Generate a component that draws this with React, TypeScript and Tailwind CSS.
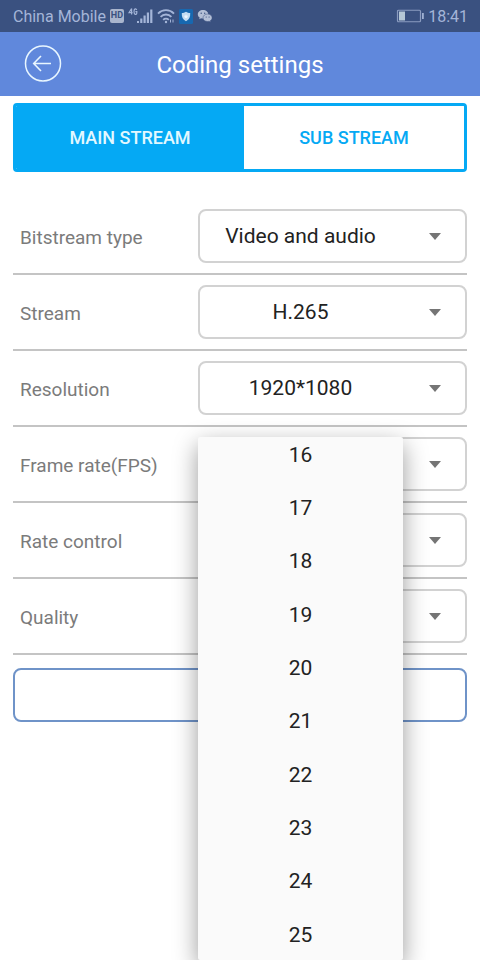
import { useState } from "react";

interface Setting {
  id: string;
  label: string;
  options: string[];
}

const SETTINGS: Setting[] = [
  {
    id: "bitstream",
    label: "Bitstream type",
    options: ["Video and audio", "Video"],
  },
  { id: "stream", label: "Stream", options: ["H.265", "H.264"] },
  { id: "resolution", label: "Resolution", options: ["1920*1080", "1280*720"] },
  { id: "fps", label: "Frame rate(FPS)", options: [] },
  { id: "rate", label: "Rate control", options: [] },
  { id: "quality", label: "Quality", options: [] },
];

const FRAME_RATES = [16, 17, 18, 19, 20, 21, 22, 23, 24, 25];

const SignalIcon = () => (
  <svg viewBox="0 0 25 18" className="h-[18px] w-[25px]" fill="currentColor">
    <path
      d="M3.6 1.500 1 5.700h3.600M3.600 1.500v6M8.700 3C8.100 1.200 6 1.200 6 4.500s2.300 3.800 2.800 1.600V4.700H7.400"
      fill="none"
      stroke="currentColor"
      strokeWidth="1.200"
    />
    <path d="M9 14h2v2H9zM12.200 11.500h2.200V16h-2.200zM15.500 8.500h2.200V16h-2.200zM18.800 5.500H21V16h-2.200zM22.200 2.500h2.200V16h-2.200z" />
  </svg>
);

const WifiIcon = () => (
  <svg
    viewBox="0 0 18 16"
    className="h-4 w-[18px]"
    fill="none"
    stroke="currentColor"
    strokeWidth="1.900"
  >
    <path d="M1 5.600C5.500 1 12.500 1 17 5.600M3.600 8.800c3-3 7.800-3 10.800 0M6.200 11.800c1.600-1.600 4-1.600 5.600 0" />
    <circle cx="9" cy="14" r="1.200" fill="currentColor" stroke="none" />
    <path d="M13.500 11.500v3M16 11.500v3" strokeWidth="1" />
  </svg>
);

const ShieldIcon = () => (
  <svg viewBox="0 0 14 15" className="h-[15px] w-[14px]">
    <rect width="14" height="15" rx="1.500" fill="#1768b0" />
    <path
      d="M7 2.800c1.300.9 2.700 1.200 4.200 1.200.2 3.900-.9 6.600-4.200 8.200-3.300-1.600-4.400-4.300-4.200-8.200C4.300 4 5.700 3.700 7 2.800Z"
      fill="#c3dcf2"
    />
    <path
      d="m7 5.200.7 1.500 1.600.1-1.200 1.100.4 1.600L7 8.700l-1.500.8.4-1.600-1.200-1.100 1.600-.1Z"
      fill="#eef6fd"
    />
  </svg>
);

const ChatIcon = () => (
  <svg viewBox="0 0 16 14" className="h-[14px] w-4">
    <path
      d="M6 1C3 1 .8 2.900.8 5.300c0 1.400.7 2.500 1.900 3.300l-.5 1.700 1.900-1c.6.2 1.200.3 1.900.3 3 0 5.300-1.900 5.300-4.300S9 1 6 1Z"
      fill="#b3bfd6"
    />
    <path
      d="M10.600 5C8 5 6 6.700 6 8.800s2 3.700 4.600 3.700c.5 0 1-.1 1.500-.2l1.600.9-.4-1.500c1.100-.7 1.800-1.700 1.800-2.900 0-2.100-2-3.800-4.500-3.800Z"
      fill="#b3bfd6"
      stroke="#3a5180"
      strokeWidth=".5"
    />
    <g fill="#3a5180">
      <circle cx="4.200" cy="4.200" r=".7" />
      <circle cx="7.700" cy="4.200" r=".7" />
      <circle cx="9.200" cy="8" r=".6" />
      <circle cx="12.100" cy="8" r=".6" />
    </g>
  </svg>
);

const BatteryIcon = () => (
  <svg viewBox="0 0 28 14" className="h-[14px] w-7">
    <rect
      x="1.500"
      y="1.250"
      width="23"
      height="11.500"
      rx="1"
      fill="none"
      stroke="#8b9cc0"
      strokeWidth="1.200"
    />
    <rect x="3" y="2.500" width="6" height="9" fill="#b5c7d6" />
    <rect x="26" y="4" width="1.800" height="6" fill="#9fb0d2" />
  </svg>
);

const StatusBar = () => (
  <div className="flex h-8 items-center justify-between bg-[#3a5180] pr-3 pl-[13px] text-[#a4b5d8]">
    <div className="flex items-center">
      <span className="pt-0.5 text-base">China Mobile</span>
      <span className="ml-1 flex h-[14px] w-[14px] items-center justify-center rounded-xs bg-[#a9b5cd] text-[9px] font-bold text-[#3a5180]">
        HD
      </span>
      <span className="ml-1 flex">
        <SignalIcon />
      </span>
      <span className="ml-1 flex">
        <WifiIcon />
      </span>
      <span className="ml-1 flex">
        <ShieldIcon />
      </span>
      <span className="ml-1 flex">
        <ChatIcon />
      </span>
    </div>
    <div className="flex items-center gap-1">
      <BatteryIcon />
      <span className="pt-0.5 text-base">18:41</span>
    </div>
  </div>
);

const Header = () => (
  <header className="grid h-16 grid-cols-[72px_1fr_72px] items-center bg-[#6088dc] text-white">
    <button type="button" aria-label="Back" className="ml-6 w-[38px]">
      <svg
        viewBox="0 0 38 38"
        className="h-[38px] w-[38px]"
        fill="none"
        stroke="#e8f6ff"
        strokeWidth="1.500"
      >
        <circle cx="19" cy="18.500" r="17.500" />
        <path
          d="M27 18.500H10M17 11 9.700 18.500l7.300 7.500"
          strokeWidth="1.600"
        />
      </svg>
    </button>
    <h1 className="pt-0.5 text-center text-2xl">Coding settings</h1>
  </header>
);

const App = () => {
  const [activeStream, setActiveStream] = useState("MAIN STREAM");
  const [menuOpen, setMenuOpen] = useState(true);
  const [frameRate, setFrameRate] = useState<number | null>(null);

  return (
    <div className="min-h-screen bg-white font-[Roboto,sans-serif]">
      <StatusBar />
      <Header />

      <main className="px-[13px] pt-[7px]">
        <div className="grid h-[69px] grid-cols-[228fr_220fr] overflow-hidden rounded-sm border-3 border-[#05a9f4]">
          {["MAIN STREAM", "SUB STREAM"].map((name) => (
            <button
              key={name}
              type="button"
              onClick={() => setActiveStream(name)}
              className={`text-lg font-medium ${
                activeStream === name
                  ? "bg-[#05a9f4] text-[#e2f8ff]"
                  : "bg-white text-[#05a9f4]"
              }`}
            >
              {name}
            </button>
          ))}
        </div>

        <form className="pt-[27px]" onSubmit={(e) => e.preventDefault()}>
          {SETTINGS.map(({ id, label, options }) => (
            <div
              key={id}
              className="flex items-center border-b-2 border-[#c4c4c4] py-2.5"
            >
              <label
                htmlFor={id}
                className="w-[185px] shrink-0 pt-1 pl-[7px] text-[19px] text-[#7b7b7b]"
              >
                {label}
              </label>
              <div className="relative flex-1">
                <select
                  id={id}
                  onMouseDown={(e) => {
                    if (id === "fps") {
                      e.preventDefault();
                      setMenuOpen(!menuOpen);
                    }
                  }}
                  className="block h-[54px] w-full appearance-none rounded-lg border-2 border-[#d2d2d2] bg-white pt-0.5 pr-16 text-center text-[21px] text-[#222222]"
                >
                  {id === "fps" && <option>{frameRate}</option>}
                  {options.map((option) => (
                    <option key={option}>{option}</option>
                  ))}
                </select>
                <svg
                  viewBox="0 0 12 7"
                  className="pointer-events-none absolute top-6 right-[26px] h-[7px] w-3"
                >
                  <path d="M0 0h12L6 7Z" fill="#757575" />
                </svg>

                {id === "fps" && menuOpen && (
                  <div className="absolute top-0 right-16 left-0 z-10 h-[523px] overflow-hidden rounded-xs bg-[#fafafa] shadow-[0_8px_24px_rgba(0,0,0,0.4)]">
                    <ul className="-mt-2 flex h-[533px] flex-col">
                      {FRAME_RATES.map((rate) => (
                        <li key={rate} className="flex-1">
                          <button
                            type="button"
                            onClick={() => {
                              setFrameRate(rate);
                              setMenuOpen(false);
                            }}
                            className="h-full w-full text-[21px] text-[#222222]"
                          >
                            {rate}
                          </button>
                        </li>
                      ))}
                    </ul>
                  </div>
                )}
              </div>
            </div>
          ))}

          <button
            type="submit"
            aria-label="Save"
            className="mt-[13px] h-[54px] w-full rounded-lg border-2 border-[#6f93c8] bg-white"
          />
        </form>
      </main>
    </div>
  );
};

export default App;
